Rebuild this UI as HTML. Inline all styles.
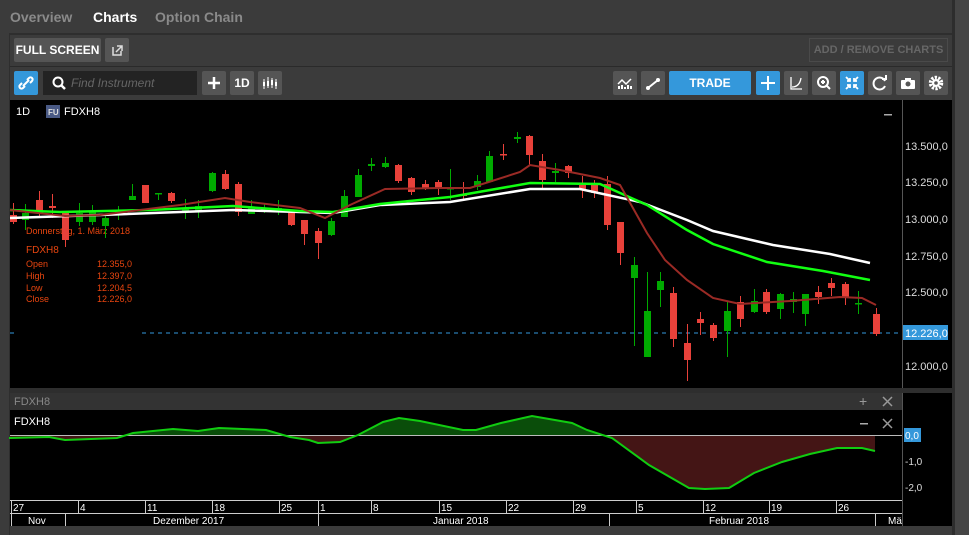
<!DOCTYPE html>
<html><head><meta charset="utf-8"><style>
*{margin:0;padding:0;box-sizing:border-box}
body{width:969px;height:535px;background:#3b3b3b;font-family:"Liberation Sans",sans-serif;position:relative;overflow:hidden}
.tab{position:absolute;top:9px;font-size:14px;font-weight:bold;color:#8a8a8a}
.btn{position:absolute;background:#555;border-radius:2px;color:#fff;font-size:12px;font-weight:bold;text-align:center}
</style></head><body>
<div class="tab" style="left:10px">Overview</div>
<div class="tab" style="left:93px;color:#fff">Charts</div>
<div class="tab" style="left:155px">Option Chain</div>
<div style="position:absolute;left:9px;top:33px;width:944px;height:2px;background:#2e2e2e"></div>
<div style="position:absolute;left:9px;top:33px;width:1px;height:502px;background:#2e2e2e"></div>
<div style="position:absolute;left:955px;top:0;width:14px;height:535px;background:#454545"></div>
<div style="position:absolute;left:952px;top:0;width:3px;height:535px;background:#2d2d2d"></div>
<div style="position:absolute;left:10px;top:66px;width:942px;height:1px;background:#2a2a2a"></div>
<div class="btn" style="left:14px;top:38px;width:87px;height:24px;line-height:24px">FULL SCREEN</div>
<div class="btn" style="left:105px;top:38px;width:24px;height:24px"><svg width="24" height="24"><path d="M8 9v8h8v-4M12 8h5v5M17 8l-6 6" stroke="#ddd" stroke-width="1.5" fill="none"/></svg></div>
<div style="position:absolute;left:809px;top:38px;width:139px;height:24px;border:1px solid #4a4a4a;color:#666;font-size:11px;font-weight:bold;text-align:center;line-height:22px">ADD / REMOVE CHARTS</div>
<div class="btn" style="left:14px;top:71px;width:24px;height:24px;background:#3498db"><svg width="24" height="24"><path d="M9 15l6-6M8 12l-2 2a2 2 0 003 3l2-2M16 12l2-2a2 2 0 00-3-3l-2 2" stroke="#fff" stroke-width="2" fill="none"/></svg></div>
<div style="position:absolute;left:43px;top:71px;width:154px;height:24px;background:#232323"><svg width="24" height="24" style="position:absolute;left:4px;top:0"><circle cx="11" cy="11" r="4.5" stroke="#fff" stroke-width="2" fill="none"/><path d="M14 14l4 4" stroke="#fff" stroke-width="2.5"/></svg><span style="position:absolute;left:28px;top:5px;font-size:12px;font-style:italic;color:#666">Find Instrument</span></div>
<div class="btn" style="left:202px;top:71px;width:24px;height:24px"><svg width="24" height="24"><path d="M12 6v12M6 12h12" stroke="#fff" stroke-width="2.5"/></svg></div>
<div class="btn" style="left:230px;top:71px;width:24px;height:24px;line-height:24px">1D</div>
<div class="btn" style="left:258px;top:71px;width:24px;height:24px"><svg width="24" height="24"><path d="M6 8v10M10 6v11M14 7v10M18 8v10" stroke="#fff" stroke-width="1"/><rect x="5" y="11" width="2" height="4" fill="#fff"/><rect x="9" y="10" width="2" height="5" fill="#fff"/><rect x="13" y="9" width="2" height="5" fill="#fff"/><rect x="17" y="11" width="2" height="4" fill="#fff"/></svg></div>
<div class="btn" style="left:613px;top:71px;width:24px;height:24px"><svg width="24" height="24"><path d="M5 13l4-4 4 4 5-5" stroke="#fff" stroke-width="1.5" fill="none"/><path d="M6 18v-3M9 18v-4M12 18v-2M15 18v-4M18 18v-3" stroke="#fff" stroke-width="2"/></svg></div>
<div class="btn" style="left:641px;top:71px;width:24px;height:24px"><svg width="24" height="24"><path d="M7 17l10-8" stroke="#fff" stroke-width="2"/><circle cx="7" cy="17" r="2" fill="#fff"/><circle cx="17" cy="9" r="2" fill="#fff"/></svg></div>
<div class="btn" style="left:669px;top:71px;width:82px;height:24px;line-height:24px;background:#3498db">TRADE</div>
<div class="btn" style="left:756px;top:71px;width:24px;height:24px;background:#3498db"><svg width="24" height="24"><path d="M12 5v14M5 12h14" stroke="#fff" stroke-width="2"/></svg></div>
<div class="btn" style="left:784px;top:71px;width:24px;height:24px"><svg width="24" height="24"><path d="M7 6v12h11M8 16c5 0 8-3 9-9" stroke="#fff" stroke-width="1.3" fill="none"/></svg></div>
<div class="btn" style="left:812px;top:71px;width:24px;height:24px"><svg width="24" height="24"><circle cx="11" cy="11" r="5" stroke="#fff" stroke-width="2" fill="none"/><path d="M9 11h4M11 9v4M14 14l4 4" stroke="#fff" stroke-width="2"/></svg></div>
<div class="btn" style="left:840px;top:71px;width:24px;height:24px;background:#3498db"><svg width="24" height="24"><path d="M6 6l4 4M18 6l-4 4M6 18l4-4M18 18l-4-4M10 7v3H7M14 7v3h3M10 17v-3H7M14 17v-3h3" stroke="#fff" stroke-width="1.8" fill="none"/></svg></div>
<div class="btn" style="left:868px;top:71px;width:24px;height:24px"><svg width="24" height="24"><path d="M17 10a6 6 0 10 0 5" stroke="#fff" stroke-width="2" fill="none"/><path d="M14 8h4V4" stroke="#fff" stroke-width="2" fill="none"/></svg></div>
<div class="btn" style="left:896px;top:71px;width:24px;height:24px"><svg width="24" height="24"><rect x="5" y="9" width="14" height="9" rx="1" fill="#fff"/><rect x="9" y="7" width="6" height="3" fill="#fff"/><circle cx="12" cy="13" r="2.5" fill="#555"/></svg></div>
<div class="btn" style="left:924px;top:71px;width:24px;height:24px"><svg width="24" height="24"><circle cx="12" cy="12" r="5.5" fill="none" stroke="#fff" stroke-width="3.5" stroke-dasharray="2.2 1.3"/><circle cx="12" cy="12" r="4" fill="#fff"/><circle cx="12" cy="12" r="1.8" fill="#555"/></svg></div>

<svg width="969" height="535" style="position:absolute;left:0;top:0">
<rect x="10" y="100" width="942" height="288" fill="#000"/>
<line x1="902.5" y1="100" x2="902.5" y2="388" stroke="#555"/>
<rect x="10" y="388" width="942" height="5" fill="#2e2e2e"/>
<rect x="10" y="393" width="892" height="17" fill="#333"/>
<rect x="902" y="393" width="50" height="133" fill="#000"/>
<line x1="902.5" y1="393" x2="902.5" y2="526" stroke="#555"/>
<rect x="10" y="410" width="892" height="90" fill="#000"/>
<rect x="10" y="500" width="892" height="26" fill="#000"/>
<rect x="10" y="526" width="942" height="9" fill="#3b3b3b"/>
<g font-size="11" fill="#fff">
<text x="16" y="115">1D</text>
<rect x="46" y="105" width="14" height="13" fill="#4a5a85"/>
<text x="48" y="115" font-size="8" font-weight="bold" fill="#ddd">FU</text>
<text x="64" y="115">FDXH8</text>
<rect x="884" y="114" width="8" height="1.5" fill="#aaa"/>
</g>
<g font-size="11" fill="#ddd">
<text x="905" y="150">13.500,0</text><text x="905" y="186">13.250,0</text><text x="905" y="223">13.000,0</text><text x="905" y="260">12.750,0</text><text x="905" y="296">12.500,0</text><text x="905" y="333">12.250,0</text><text x="905" y="370">12.000,0</text>
</g>
<line x1="10" y1="333" x2="15" y2="333" stroke="#3498db" stroke-dasharray="4 4"/>
<line x1="142" y1="333" x2="902" y2="333" stroke="#3498db" stroke-dasharray="4 4"/>
<rect x="903" y="325" width="45" height="15" fill="#3498db"/>
<text x="905" y="337" font-size="11" fill="#fff">12.226,0</text>
<g font-size="9" fill="#e8450f">
<text x="26" y="234">Donnerstag, 1. März 2018</text>
<text x="26" y="253" font-size="10">FDXH8</text>
<text x="26" y="267">Open</text><text x="97" y="267">12.355,0</text>
<text x="26" y="279">High</text><text x="97" y="279">12.397,0</text>
<text x="26" y="291">Low</text><text x="97" y="291">12.204,5</text>
<text x="26" y="302">Close</text><text x="97" y="302">12.226,0</text>
</g>
<g id="c"></g>
<polyline fill="none" stroke="#fff" stroke-width="2.5" points="10,218 100,215 233,210 333,213 380,205 450,202 530,189 580,189 640,202 687,220 713,231 773,245 830,254 870,263"/>
<polyline fill="none" stroke="#1f1" stroke-width="2.5" points="10,210 60,212 150,210 233,206 300,211 333,212 380,204 450,197 530,183 600,184 647,205 687,230 713,244 767,262 823,271 870,280"/>
<polyline fill="none" stroke="#9a2a25" stroke-width="2" points="10,210 65,216 100,215 180,205 225,198 250,202 300,208 325,218 350,205 385,189 440,188 470,188 520,172 530,165 560,170 600,178 620,185 647,233 665,260 687,280 713,298 740,304 790,301 840,297 862,298 876,305"/>
<text x="14" y="405" font-size="11" fill="#888">FDXH8</text>
<text x="859" y="406" font-size="14" fill="#999">+</text>
<path d="M883 397l9 9M892 397l-9 9" stroke="#999" stroke-width="1.5"/>
<text x="14" y="425" font-size="11" fill="#fff">FDXH8</text>
<rect x="860" y="423" width="8" height="1.5" fill="#aaa"/>
<path d="M883 419l9 9M892 419l-9 9" stroke="#999" stroke-width="1.5"/>
<clipPath id="up"><rect x="10" y="400" width="892" height="35"/></clipPath>
<clipPath id="dn"><rect x="10" y="435" width="892" height="70"/></clipPath>
<polygon clip-path="url(#up)" fill="#0a4d0a" points="9,435 9,438 49,437 65,440 117,438 133,433 173,429 198,431 219,428 266,430 290,437 309,440 318,443 340,442 358,435 383,422 399,418 420,421 463,430 476,430 501,423 532,416 572,423 587,430 612,438 649,465 689,488 705,489 729,488 754,473 782,462 810,454 837,448 862,448 875,451 875,435"/>
<polygon clip-path="url(#dn)" fill="#441515" points="9,435 9,438 49,437 65,440 117,438 133,433 173,429 198,431 219,428 266,430 290,437 309,440 318,443 340,442 358,435 383,422 399,418 420,421 463,430 476,430 501,423 532,416 572,423 587,430 612,438 649,465 689,488 705,489 729,488 754,473 782,462 810,454 837,448 862,448 875,451 875,435"/>
<line x1="10" y1="435.5" x2="902" y2="435.5" stroke="#bbb"/>
<polyline fill="none" stroke="#1c1" stroke-width="2" points="9,438 49,437 65,440 117,438 133,433 173,429 198,431 219,428 266,430 290,437 309,440 318,443 340,442 358,435 383,422 399,418 420,421 463,430 476,430 501,423 532,416 572,423 587,430 612,438 649,465 689,488 705,489 729,488 754,473 782,462 810,454 837,448 862,448 875,451"/>
<rect x="904" y="428" width="17" height="14" fill="#3498db"/>
<text x="905" y="439" font-size="10" fill="#fff">0,0</text>
<text x="905" y="465" font-size="10" fill="#ddd">-1,0</text>
<text x="905" y="491" font-size="10" fill="#ddd">-2,0</text>
<line x1="10" y1="500.5" x2="902" y2="500.5" stroke="#ccc"/>
<line x1="10" y1="513.5" x2="902" y2="513.5" stroke="#ccc"/>
<g stroke="#ccc">
<line x1="11.5" y1="500" x2="11.5" y2="526"/><line x1="78.5" y1="500" x2="78.5" y2="513"/><line x1="145.5" y1="500" x2="145.5" y2="513"/><line x1="212.5" y1="500" x2="212.5" y2="513"/><line x1="279.5" y1="500" x2="279.5" y2="513"/><line x1="318.5" y1="500" x2="318.5" y2="526"/><line x1="371.5" y1="500" x2="371.5" y2="513"/><line x1="439.5" y1="500" x2="439.5" y2="513"/><line x1="506.5" y1="500" x2="506.5" y2="513"/><line x1="573.5" y1="500" x2="573.5" y2="513"/><line x1="636.5" y1="500" x2="636.5" y2="513"/><line x1="703.5" y1="500" x2="703.5" y2="513"/><line x1="769.5" y1="500" x2="769.5" y2="513"/><line x1="836.5" y1="500" x2="836.5" y2="513"/>
<line x1="65.5" y1="513" x2="65.5" y2="526"/><line x1="609.5" y1="513" x2="609.5" y2="526"/><line x1="875.5" y1="513" x2="875.5" y2="526"/>
</g>
<g font-size="10" fill="#fff">
<text x="13" y="511">27</text><text x="80" y="511">4</text><text x="147" y="511">11</text><text x="214" y="511">18</text><text x="281" y="511">25</text><text x="320" y="511">1</text><text x="373" y="511">8</text><text x="441" y="511">15</text><text x="508" y="511">22</text><text x="575" y="511">29</text><text x="638" y="511">5</text><text x="705" y="511">12</text><text x="771" y="511">19</text><text x="838" y="511">26</text>
<text x="28" y="524">Nov</text><text x="153" y="524">Dezember 2017</text><text x="433" y="524">Januar 2018</text><text x="709" y="524">Februar 2018</text><text x="888" y="524">Mä</text>
</g>
</svg>
<script>
var d=[[13,215,222,203,224,'r'],[25,213,220,204,230,'g'],[39,200,213,191,216,'r'],[52,206,208,194,218,'r'],[65,211,240,211,247,'r'],[79,213,222,203,226,'g'],[92,211,222,205,225,'g'],[105,218,226,216,238,'g'],[118,212,214,206,220,'g'],[132,196,200,184,200,'g'],[145,185,203,185,203,'r'],[158,193,194,193,200,'g'],[171,193,201,192,203,'r'],[185,209,211,199,219,'g'],[198,206,212,200,218,'g'],[212,173,191,172,192,'g'],[225,174,189,170,190,'r'],[238,184,212,182,216,'r'],[251,207,214,200,214,'g'],[264,209,211,204,213,'g'],[278,208,212,200,215,'g'],[291,213,225,210,226,'r'],[304,220,234,220,245,'r'],[318,231,243,228,259,'r'],[331,221,235,218,236,'g'],[344,196,217,190,217,'g'],[358,175,197,169,197,'g'],[371,164,166,158,171,'g'],[385,163,167,157,168,'g'],[398,165,181,164,183,'r'],[411,178,192,177,195,'r'],[425,184,189,180,190,'r'],[438,182,188,180,195,'r'],[450,188,189,169,200,'g'],[463,194,196,182,200,'r'],[477,181,187,175,190,'g'],[489,156,182,151,182,'g'],[503,154,155,144,160,'r'],[517,137,139,132,143,'g'],[529,136,155,135,165,'r'],[542,161,180,154,188,'r'],[555,171,173,163,182,'g'],[568,166,173,165,178,'r'],[582,185,190,176,198,'r'],[594,185,193,180,198,'r'],[607,184,225,176,230,'r'],[620,222,253,222,265,'r'],[634,265,278,257,346,'g'],[647,311,357,272,357,'g'],[660,281,290,272,307,'g'],[673,293,339,287,347,'r'],[687,343,360,324,381,'r'],[700,319,323,312,335,'r'],[713,325,338,323,341,'r'],[727,311,331,301,357,'g'],[740,302,319,296,327,'r'],[754,301,312,289,313,'g'],[766,292,312,289,314,'r'],[780,294,309,293,319,'g'],[793,299,302,292,313,'g'],[805,294,314,294,326,'g'],[818,292,297,286,304,'r'],[831,283,288,278,296,'r'],[845,284,297,282,305,'r'],[858,303,304,291,314,'g'],[876,314,334,308,336,'r']];
var s='';d.forEach(function(c){var col=c[5]=='r'?'#e8413a':'#0a0';s+='<line x1="'+(c[0]+.5)+'" y1="'+c[3]+'" x2="'+(c[0]+.5)+'" y2="'+c[4]+'" stroke="'+col+'"/><rect x="'+(c[0]-3)+'" y="'+c[1]+'" width="7" height="'+Math.max(1.5,c[2]-c[1])+'" fill="'+col+'"/>';});
document.getElementById('c').innerHTML=s;
</script>
</body></html>
